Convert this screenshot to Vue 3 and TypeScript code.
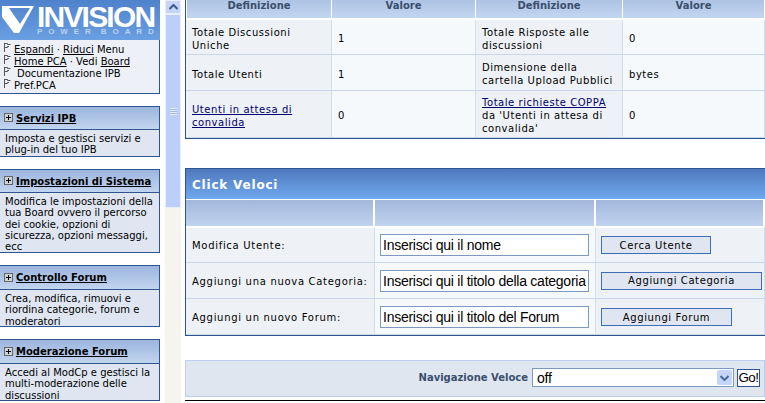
<script setup lang="ts">
const statRows = [
  [{ text: 'Totale Discussioni Uniche' }, { text: '1' }, { text: 'Totale Risposte alle discussioni' }, { text: '0' }],
  [{ text: 'Totale Utenti' }, { text: '1' }, { text: 'Dimensione della cartella Upload Pubblici' }, { text: 'bytes' }],
  [
    { text: '', link: 'Utenti in attesa di convalida' },
    { text: '0' },
    { text: "da 'Utenti in attesa di convalida'", link: 'Totale richieste COPPA' },
    { text: '0' }
  ]
]

const menu = ['a', 'b', 'c', 'd']

const blocks = [
  { title: 'Servizi IPB', body: 'Imposta e gestisci servizi e plug-in del tuo IPB', cls: 'b1' },
  { title: 'Impostazioni di Sistema', body: 'Modifica le impostazioni della tua Board ovvero il percorso dei cookie, opzioni di sicurezza, opzioni messaggi, ecc', cls: 'b2' },
  { title: 'Controllo Forum', body: 'Crea, modifica, rimuovi e riordina categorie, forum e moderatori', cls: 'b3' },
  { title: 'Moderazione Forum', body: 'Accedi al ModCp e gestisci la multi-moderazione delle discussioni', cls: 'b4' }
]

const quick = [
  { label: 'Modifica Utente:', value: 'Inserisci qui il nome', btn: 'Cerca Utente', width: '110px' },
  { label: 'Aggiungi una nuova Categoria:', value: 'Inserisci qui il titolo della categoria', btn: 'Aggiungi Categoria', width: '161px' },
  { label: 'Aggiungi un nuovo Forum:', value: 'Inserisci qui il titolo del Forum', btn: 'Aggiungi Forum', width: '131px' }
]
</script>

<template>
  <div class="page">
    <aside class="side">
      <div class="logo">
        <svg class="logo-mark" width="33" height="30" viewBox="0 0 33 30">
          <path d="M1 1H33L18 28H13L1 12ZM8 3 19 19 29 3Z" fill="#fff" fill-rule="evenodd" />
        </svg>
        <div class="logo-text">
          <div class="logo-big">INVISION</div>
          <div class="logo-small">POWER BOARD</div>
        </div>
      </div>
      <div class="menu">
        <div v-for="m in menu" :key="m" class="menu-row">
          <svg class="flag" width="7" height="9" viewBox="0 0 7 9"><path d="M0.5 0V9M0.5 0.5H3.5V1.5H6.5M0.5 4.5H3.5V3.5H5" fill="none" stroke="#555" /></svg>
          <template v-if="m === 'a'"><a>Espandi</a>&nbsp;· <a>Riduci</a>&nbsp;Menu</template>
          <template v-else-if="m === 'b'"><a>Home PCA</a>&nbsp;· Vedi&nbsp;<a>Board</a></template>
          <span v-else-if="m === 'c'" class="doc">Documentazione IPB</span>
          <template v-else>Pref.PCA</template>
        </div>
      </div>
      <section v-for="b in blocks" :key="b.title" class="block" :class="b.cls">
        <header class="block-head">
          <span class="plus"></span>
          <a>{{ b.title }}</a>
        </header>
        <p class="block-body">{{ b.body }}</p>
      </section>
    </aside>

    <div class="scrollbar">
      <div class="sb-up">
        <svg width="9" height="6" viewBox="0 0 9 6"><path d="M0.5 5 4.5 1 8.5 5" fill="none" stroke="#3e5a88" stroke-width="2" /></svg>
      </div>
      <div class="sb-thumb"><span class="grip"></span></div>
      <div class="sb-track"></div>
    </div>

    <main class="main">
      <div class="stats">
        <div class="grid stat-grid">
          <div class="th">Definizione</div>
          <div class="th">Valore</div>
          <div class="th">Definizione</div>
          <div class="th">Valore</div>
          <template v-for="(row, i) in statRows" :key="i">
            <div v-for="(cell, j) in row" :key="j" class="td stat" :class="j % 2 ? 'alt' : ''">
              <div>
                <a v-if="cell.link" class="link">{{ cell.link }}</a>
                <br v-if="cell.link && cell.text" />
                {{ cell.text }}
              </div>
            </div>
          </template>
        </div>
      </div>

      <div class="quick">
        <div class="quick-title">Click Veloci</div>
        <div class="grid quick-grid">
          <div class="sub"></div>
          <div class="sub"></div>
          <div class="sub"></div>
          <template v-for="q in quick" :key="q.label">
            <div class="td"><div class="q-label">{{ q.label }}</div></div>
            <div class="td alt input-cell"><input class="text-in" :value="q.value" /></div>
            <div class="td btn-cell"><button class="btn" :style="{ width: q.width }">{{ q.btn }}</button></div>
          </template>
        </div>
      </div>

      <div class="nav">
        <b class="nav-label">Navigazione Veloce</b>
        <div class="select">
          <span>off</span>
          <span class="arrow">
            <svg width="9" height="6" viewBox="0 0 9 6"><path d="M0.5 1 4.5 5 8.5 1" fill="none" stroke="#4d6a94" stroke-width="2" /></svg>
          </span>
        </div>
        <button class="go">Go!</button>
      </div>
      <div class="rule"></div>
    </main>
  </div>
</template>

<style>
html, body {
  margin: 0;
  background: #fff;
  overflow: hidden;
}
</style>

<style scoped>
.page {
  display: flex;
  width: 765px;
  height: 403px;
  overflow: hidden;
  font-family: "DejaVu Sans", Verdana, sans-serif;
  font-size: 10px;
  color: #000;
}

/* sidebar */
.side {
  width: 160px;
  flex: none;
}
.logo {
  display: flex;
  box-sizing: border-box;
  height: 40px;
  padding-left: 1px;
  background: linear-gradient(#4f82cc, #6a9fe2);
}
.logo-mark {
  flex: none;
  margin-top: 5px;
}
.logo-text {
  margin-left: 3px;
  padding-top: 6px;
  font-family: "Liberation Sans", Arial, sans-serif;
  font-weight: 700;
  white-space: nowrap;
}
.logo-big {
  height: 22px;
  line-height: 22px;
  font-size: 30px;
  letter-spacing: -1.8px;
  color: #fff;
}
.logo-small {
  height: 7px;
  line-height: 7px;
  font-size: 8px;
  letter-spacing: 5.9px;
  word-spacing: -4px;
  color: #b9d2f2;
}
.menu {
  box-sizing: border-box;
  height: 54px;
  padding: 3px 0 0 4px;
  background: #edf1f7;
  border-right: 1px solid #2f5490;
  border-bottom: 1px solid #2f5490;
}
.menu-row {
  display: flex;
  align-items: center;
  height: 12px;
  white-space: pre;
}
.menu-row a {
  color: #000;
  text-decoration: underline;
}
.flag {
  flex: none;
  margin: -3px 3px 0 0;
}
.doc {
  margin-left: 3px;
}
.block {
  box-sizing: border-box;
  margin-top: 12px;
  background: #dfe6f1;
  border: 1px solid #2f5490;
  border-width: 1px 1px 1px 0;
}
.b1 { height: 51px; }
.b2 { height: 84px; }
.b3 { height: 62px; }
.b4 { height: 62px; }
.block-head {
  display: flex;
  align-items: center;
  gap: 3px;
  box-sizing: border-box;
  height: 23px;
  padding-left: 4px;
  background: linear-gradient(#9cb5dd, #c2d5ef);
  border-bottom: 1px solid #2f5490;
  font-weight: 700;
}
.b3 .block-head, .b4 .block-head { height: 24px; }
.block-head a {
  color: #000;
  text-decoration: underline;
}
.plus {
  position: relative;
  flex: none;
  box-sizing: border-box;
  width: 9px;
  height: 9px;
  margin-top: -1px;
  background: #cfd4d8;
  border: 1px solid #666;
}
.plus::before,
.plus::after {
  content: "";
  position: absolute;
  background: #000;
}
.plus::before { left: 1px; top: 3px; width: 5px; height: 1px; }
.plus::after { left: 3px; top: 1px; width: 1px; height: 5px; }
.block-body {
  margin: 0;
  padding: 3px 4px 0 5px;
  line-height: 11.25px;
}

/* fake scrollbar */
.scrollbar {
  display: flex;
  flex-direction: column;
  flex: none;
  width: 16px;
  margin: 0 4px 0 5px;
}
.sb-up {
  display: flex;
  align-items: center;
  justify-content: center;
  box-sizing: border-box;
  height: 14px;
  background: #c5d5fa;
  border: 1px solid #e8eefc;
}
.sb-thumb {
  display: flex;
  align-items: center;
  justify-content: center;
  box-sizing: border-box;
  height: 194px;
  background: #bccffa;
  border: 1px solid #e8eefc;
}
.grip {
  width: 7px;
  height: 7px;
  background: repeating-linear-gradient(#e8eefc 0 1px, #9fb6e6 1px 2px);
}
.sb-track {
  flex: 1;
  background: #f5f4ef;
}

/* main column */
.main {
  flex: none;
  width: 580px;
}
.stats {
  height: 139px;
  box-sizing: border-box;
  background: #fff;
  border-left: 1px solid #2f5490;
  border-bottom: 1px solid #2f5490;
}
.grid {
  display: grid;
}
.stat-grid {
  grid-template-columns: 146px 144px 147px 142px;
  grid-template-rows: 20px 35px 36px 47px;
}
.th {
  height: 18px;
  line-height: 11px;
  margin-right: 1px;
  text-align: center;
  font-weight: 700;
  color: #3a4f6c;
  background: linear-gradient(#aec3e4, #c3d6f1);
}
.th:first-child {
  margin-left: 1px;
}
.td {
  display: flex;
  align-items: center;
  box-sizing: border-box;
  padding: 0 6px;
  line-height: 13px;
  letter-spacing: 0.55px;
  background: #eef2f6;
  border-right: 1px solid #d3e0ec;
  border-bottom: 1px solid #c8d8e8;
}
.td.stat {
  padding-top: 3px;
}
.td.alt {
  background: #f5f9fc;
}
.link {
  color: #000070;
  text-decoration: underline;
}

.quick {
  margin-top: 29px;
  box-sizing: border-box;
  height: 168px;
  background: #fff;
  border-top: 1px solid #2f5490;
  border-left: 1px solid #2f5490;
  border-bottom: 1px solid #2f5490;
}
.quick-title {
  box-sizing: border-box;
  height: 30px;
  padding: 9px 0 0 6px;
  color: #fff;
  font-size: 12px;
  font-weight: 700;
  letter-spacing: 0.8px;
  line-height: 14px;
  background: linear-gradient(#4f78bd, #6fa9ee);
}
.quick-grid {
  grid-template-columns: 189px 221px 169px;
  grid-template-rows: 28px 35px 36px 36px;
  padding-top: 1px;
}
.quick-grid .td:nth-last-child(-n + 3) {
  padding-top: 1px;
}
.q-label {
  margin-top: 1px;
  letter-spacing: 0.7px;
}
.sub {
  height: 26px;
  margin-right: 2px;
  background: linear-gradient(#a3b7dc, #c0d3ef);
}
.input-cell {
  padding: 0 0 0 5px;
}
.text-in {
  box-sizing: border-box;
  width: 209px;
  height: 22px;
  padding: 0 2px;
  border: 1px solid #7c9abf;
  background: #fff;
  color: #000;
  font-family: "Liberation Sans", Arial, sans-serif;
  font-size: 14px;
  letter-spacing: -0.25px;
  outline: none;
}
.btn-cell {
  padding: 0 0 0 5px;
}
.btn {
  box-sizing: border-box;
  height: 18px;
  padding: 0;
  background: #dfe6f1;
  border: 1px solid #3f6db5;
  color: #000;
  font-family: "DejaVu Sans", Verdana, sans-serif;
  font-size: 10px;
  letter-spacing: 0.6px;
}

.nav {
  display: flex;
  align-items: center;
  justify-content: flex-end;
  box-sizing: border-box;
  height: 37px;
  margin-top: 24px;
  padding: 0 4px 2px 0;
  background: #dfe6f0;
  border: 1px solid #bcd0ed;
}
.nav-label {
  margin-right: 4px;
  color: #3a4f6c;
}
.select {
  display: flex;
  align-items: center;
  justify-content: space-between;
  box-sizing: border-box;
  width: 202px;
  height: 19px;
  padding: 0 1px 0 4px;
  background: #fff;
  border: 1px solid #7c9abf;
  font-family: "Liberation Sans", Arial, sans-serif;
  font-size: 14px;
  letter-spacing: -0.25px;
}
.arrow {
  display: flex;
  align-items: center;
  justify-content: center;
  width: 15px;
  height: 15px;
  background: #c5d5fa;
  border-radius: 2px;
}
.go {
  box-sizing: border-box;
  width: 23px;
  height: 18px;
  margin-left: 3px;
  padding: 0;
  background: #fff;
  border: 1px solid #2f5490;
  color: #000;
  font-family: "Liberation Sans", Arial, sans-serif;
  font-size: 13.33px;
  letter-spacing: -0.5px;
}
.rule {
  height: 1px;
  margin-top: 3px;
  background: #000;
}
</style>
